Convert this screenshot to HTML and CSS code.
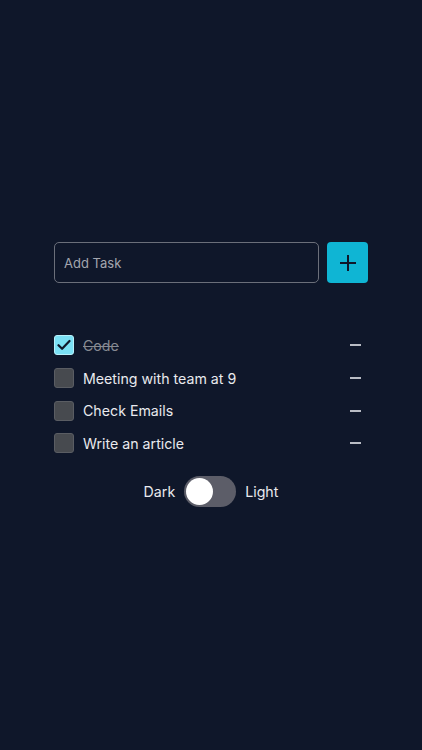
FILE: index.html
```html
<!DOCTYPE html>
<html lang="en">
  <head>
    <meta charset="UTF-8" />
    <meta name="viewport" content="width=device-width, initial-scale=1.0" />
    <title>Todo</title>
    <link rel="stylesheet" href="styles.css">
  </head>
  <body>
    <main class="app">
      <form class="add-form">
        <input class="add-input" type="text" placeholder="Add Task" />
        <button class="add-btn" type="button" aria-label="Add">
          <svg width="20" height="20" viewBox="0 0 20 20">
            <path d="M10 2v16M2 10h16" stroke="#0f172a" stroke-width="2" fill="none" />
          </svg>
        </button>
      </form>

      <ul class="task-list">
        <li class="task done">
          <span class="check">
            <svg width="14" height="14" viewBox="0 0 14 14">
              <path d="M1.5 7.2l3.6 3.6L12.5 3" stroke="#0f172a" stroke-width="2.2" fill="none" stroke-linecap="round" stroke-linejoin="round" />
            </svg>
          </span>
          <span class="task-text">Code</span>
          <span class="remove"></span>
        </li>
        <li class="task">
          <span class="check"></span>
          <span class="task-text">Meeting with team at 9</span>
          <span class="remove"></span>
        </li>
        <li class="task">
          <span class="check"></span>
          <span class="task-text">Check Emails</span>
          <span class="remove"></span>
        </li>
        <li class="task">
          <span class="check"></span>
          <span class="task-text">Write an article</span>
          <span class="remove"></span>
        </li>
      </ul>

      <div class="theme-row">
        <span>Dark</span>
        <span class="switch"><span class="knob"></span></span>
        <span>Light</span>
      </div>
    </main>
  </body>
</html>
```

FILE: styles.css
```css
html,
body {
  margin: 0;
  padding: 0;
  height: 100%;
}
body {
  background-color: #0f172a;
  color: #e9eaee;
  font-family: Inter, "Noto Sans", sans-serif;
}
.app {
  padding: 242px 54px 0;
}
.add-form {
  display: flex;
  gap: 8px;
  height: 41px;
}
.add-input {
  flex: 1;
  box-sizing: border-box;
  height: 41px;
  margin: 0;
  padding: 0 9px;
  background: transparent;
  border: 1px solid #6b6f7a;
  border-radius: 5px;
  color: #e9eaee;
  font-family: inherit;
  font-size: 13px;
  outline: none;
}
.add-input::placeholder {
  color: #a3a6ae;
}
.add-btn {
  width: 41px;
  height: 41px;
  padding: 0;
  border: none;
  border-radius: 4px;
  background-color: #0fb5d4;
  display: flex;
  justify-content: center;
  align-items: center;
}
.task-list {
  list-style: none;
  margin: 46px 0 0;
  padding: 0;
}
.task {
  height: 32.7px;
  display: flex;
  align-items: center;
  gap: 9px;
}
.check {
  box-sizing: border-box;
  width: 20px;
  height: 20px;
  border-radius: 3px;
  background-color: #474a4f;
  border: 1px solid #5a5d63;
  display: flex;
  justify-content: center;
  align-items: center;
}
.done .check {
  background-color: #7ae0f4;
  border-color: #b8f1fb;
}
.task-text {
  flex: 1;
  font-size: 14.2px;
}
.done .task-text {
  color: #878a92;
  text-decoration: line-through;
}
.remove {
  width: 11px;
  height: 2px;
  margin-right: 7px;
  background-color: #b9bcc4;
}
.theme-row {
  margin-top: 16.5px;
  display: flex;
  justify-content: center;
  align-items: center;
  gap: 9px;
  font-size: 14.2px;
}
.switch {
  width: 52px;
  height: 31px;
  border-radius: 16px;
  background-color: #5c5d68;
  display: flex;
  align-items: center;
  padding: 0 2px;
  box-sizing: border-box;
}
.knob {
  width: 27px;
  height: 27px;
  border-radius: 50%;
  background-color: #fff;
}
```
